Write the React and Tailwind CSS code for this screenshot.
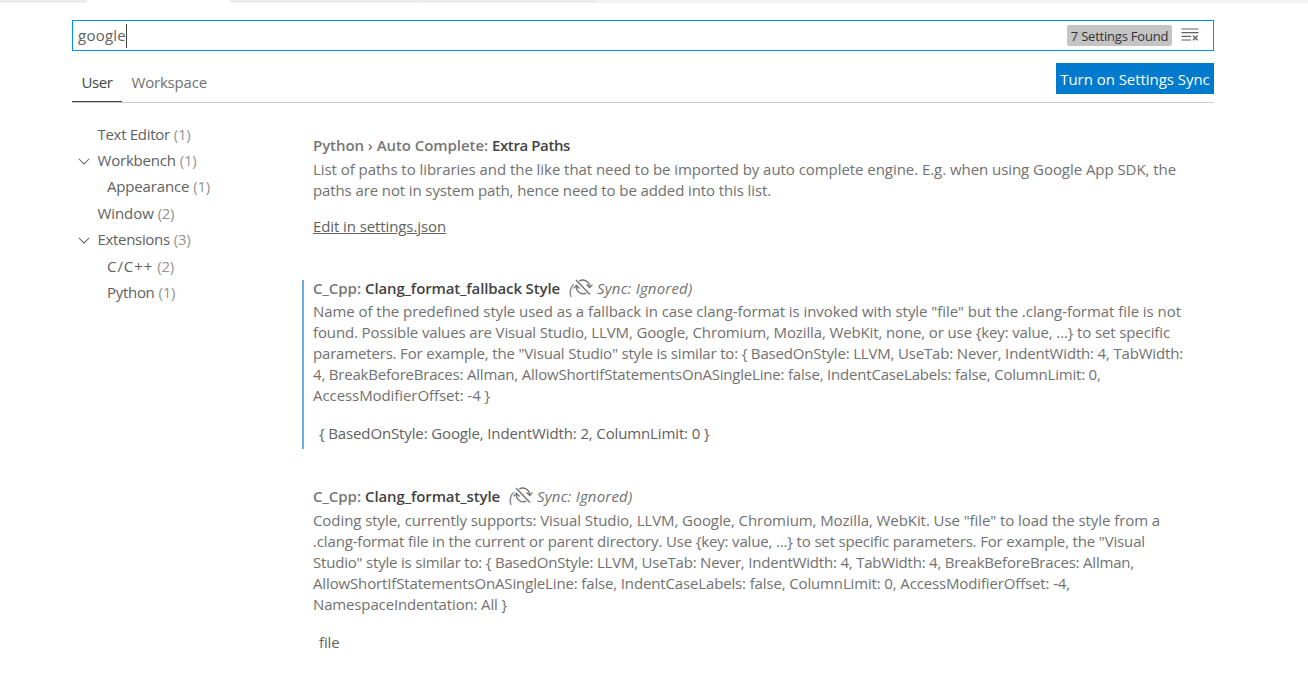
import React from "react";
import { VscChevronDown } from "react-icons/vsc";

function SyncIgnoredIcon() {
  return (
    <svg className="relative top-[-1.5px] h-4 w-5" viewBox="0 0 20 16" fill="none" stroke="currentColor" strokeWidth="1.35">
      <path d="M3 1 L17 15.5" />
      <path d="M6.2 2 C10.5 -0.4 16.4 1.8 16.8 8" />
      <path d="M13.6 5.6 L16.8 8.6 L19.4 5.6" />
      <path d="M3.4 7 C3 13.2 9 16.4 13.4 14" />
      <path d="M0.6 9.4 L3.4 6.4 L6.6 9.4" />
    </svg>
  );
}

function ClearFiltersIcon() {
  return (
    <svg className="relative top-[-1px] ml-[9px] h-[13px] w-[18px]" viewBox="0 0 18 13" fill="none" stroke="#616161" strokeWidth="1.2">
      <path d="M0.5 1H17.5M0.5 4.7H17.5M0.5 8.4H10M0.5 12H10" />
      <path d="M12 7.6L16.6 12.2M16.6 7.6L12 12.2" strokeWidth="1.4" />
    </svg>
  );
}

function TreeRow({ label, count, tracking, open, nested }) {
  return (
    <div className="flex h-[26.4px] items-center">
      <span className="flex w-[25.5px] pl-[3px] text-[18px]">{open && <VscChevronDown />}</span>
      {nested && <span className="w-[9.5px]" />}
      <span className={tracking}>{label}</span>
      <span className="ml-1 tracking-[-0.3px] text-[#949494]">({count})</span>
    </div>
  );
}

function Title({ category, categoryClass, name, nameClass, ignored }) {
  return (
    <h3 className="flex h-[21px] items-center font-semibold whitespace-pre">
      <span className={"text-[#767676] " + categoryClass}>{category}</span>
      <span className={"text-[#424242] " + nameClass}>{name}</span>
      {ignored && (
        <span className="ml-[9px] flex items-center font-normal text-[#717171] italic">
          <span className="w-[4px]">(</span>
          <SyncIgnoredIcon />
          <span className="ml-[4px] tracking-[0.18px]">Sync: Ignored)</span>
        </span>
      )}
    </h3>
  );
}

function Description({ lines, className }) {
  return (
    <div className={"text-[#717171] " + className}>
      {lines.map(([text, tracking]) => (
        <p key={text} className={"h-[21px] whitespace-pre " + tracking}>{text}</p>
      ))}
    </div>
  );
}

const extraPaths = [
  ["List of paths to libraries and the like that need to be imported by auto complete engine. E.g. when using Google App SDK, the", "tracking-[-0.052px]"],
  ["paths are not in system path, hence need to be added into this list.", "tracking-[-0.11px]"],
];

const fallbackStyle = [
  ['Name of the predefined style used as a fallback in case clang-format is invoked with style "file" but the .clang-format file is not', "tracking-[-0.054px]"],
  ["found. Possible values are Visual Studio, LLVM, Google, Chromium, Mozilla, WebKit, none, or use {key: value, ...} to set specific", "tracking-[-0.126px]"],
  ['parameters. For example, the "Visual Studio" style is similar to: { BasedOnStyle: LLVM, UseTab: Never, IndentWidth: 4, TabWidth:', "tracking-[-0.173px]"],
  ["4, BreakBeforeBraces: Allman, AllowShortIfStatementsOnASingleLine: false, IndentCaseLabels: false, ColumnLimit: 0,", "tracking-[-0.196px]"],
  ["AccessModifierOffset: -4 }", "tracking-[-0.072px]"],
];

const formatStyle = [
  ['Coding style, currently supports: Visual Studio, LLVM, Google, Chromium, Mozilla, WebKit. Use "file" to load the style from a', "tracking-[-0.074px]"],
  ['.clang-format file in the current or parent directory. Use {key: value, ...} to set specific parameters. For example, the "Visual', "tracking-[-0.154px]"],
  ['Studio" style is similar to: { BasedOnStyle: LLVM, UseTab: Never, IndentWidth: 4, TabWidth: 4, BreakBeforeBraces: Allman,', "tracking-[-0.199px]"],
  ["AllowShortIfStatementsOnASingleLine: false, IndentCaseLabels: false, ColumnLimit: 0, AccessModifierOffset: -4,", "tracking-[-0.142px]"],
  ["NamespaceIndentation: All }", "tracking-[-0.143px]"],
];

export default function App() {
  return (
    <div className="h-[689px] w-[1308px] overflow-hidden bg-white font-['Open_Sans','Noto_Sans',sans-serif] text-[15px] leading-[21px] text-[#616161]">
      <div className="flex h-[3px] bg-[#f3f3f3]">
        <div className="w-[86px] bg-[#ececec]" />
        <div className="mx-px w-[143px] bg-white" />
        <div className="w-[191px] bg-[#ececec]" />
        <div className="ml-px w-[175px] bg-[#ececec]" />
      </div>

      <div className="ml-[72px] w-[1142px]">
        <div className="mt-[17px] flex h-[31px] items-center border border-[#0090f1] pr-[14px] pl-[5px]">
          <span className="tracking-[0.24px]">google</span>
          <span className="h-6 w-px bg-[#424242]" />
          <span className="ml-auto flex h-[21px] w-[105px] items-center justify-center rounded-[2px] bg-[#c4c4c4] pt-[2px] text-[13px] tracking-[-0.22px] text-[#333333]">
            7 Settings Found
          </span>
          <ClearFiltersIcon />
        </div>

        <header className="mt-3 flex h-[40px] items-start justify-between border-b border-[#cccccc]">
          <nav className="flex h-full">
            <span className="flex w-[50px] justify-center border-b border-[#424242] pt-[9px] tracking-[-0.4px] text-[#424242]">User</span>
            <span className="ml-[9.5px] pt-[9px] tracking-[-0.2px] text-[#717171]">Workspace</span>
          </nav>
          <button className="h-[31px] w-[158px] bg-[#007acc] pt-[2px] tracking-[-0.045px] whitespace-nowrap text-white">
            Turn on Settings Sync
          </button>
        </header>

        <main className="flex">
          <aside className="w-[230px] shrink-0 pt-[18px]">
            <TreeRow label="Text Editor" count={1} tracking="tracking-[-0.3px]" />
            <TreeRow label="Workbench" count={1} tracking="tracking-[-0.2px]" open />
            <TreeRow label="Appearance" count={1} tracking="tracking-[-0.16px]" nested />
            <TreeRow label="Window" count={2} tracking="tracking-[-0.08px]" />
            <TreeRow label="Extensions" count={3} tracking="tracking-[-0.32px]" open />
            <TreeRow label="C/C++" count={2} tracking="tracking-[0.95px]" nested />
            <TreeRow label="Python" count={1} tracking="tracking-[-0.3px]" nested />
          </aside>

          <div className="min-w-0 flex-1">
            <section className="mt-[32px] h-[145px] pl-[11px]">
              <Title category="Python › Auto Complete:" categoryClass="tracking-[-0.063px]" name="Extra Paths" nameClass="ml-1 tracking-[-0.393px]" />
              <Description lines={extraPaths} className="mt-[3px]" />
              <a className="mt-[15px] block tracking-[-0.098px] underline">Edit in settings.json</a>
            </section>

            <section className="flex h-[169px] border-l-2 border-[#66afe0] pl-[9px]">
              <div className="-mt-[2px]">
                <Title category="C_Cpp:" categoryClass="tracking-[-0.029px]" name="Clang_format_fallback Style" nameClass="ml-1 tracking-[-0.129px]" ignored />
                <Description lines={fallbackStyle} className="mt-[2px]" />
                <p className="mt-[17px] pl-[6px] tracking-[-0.128px]">{"{ BasedOnStyle: Google, IndentWidth: 2, ColumnLimit: 0 }"}</p>
              </div>
            </section>

            <section className="mt-[37px] pl-[11px]">
              <Title category="C_Cpp:" categoryClass="tracking-[-0.029px]" name="Clang_format_style" nameClass="ml-1 tracking-[-0.115px]" ignored />
              <Description lines={formatStyle} className="mt-[3px]" />
              <p className="mt-[17px] pl-[6px] tracking-[-0.136px]">file</p>
            </section>
          </div>
        </main>
      </div>
    </div>
  );
}
